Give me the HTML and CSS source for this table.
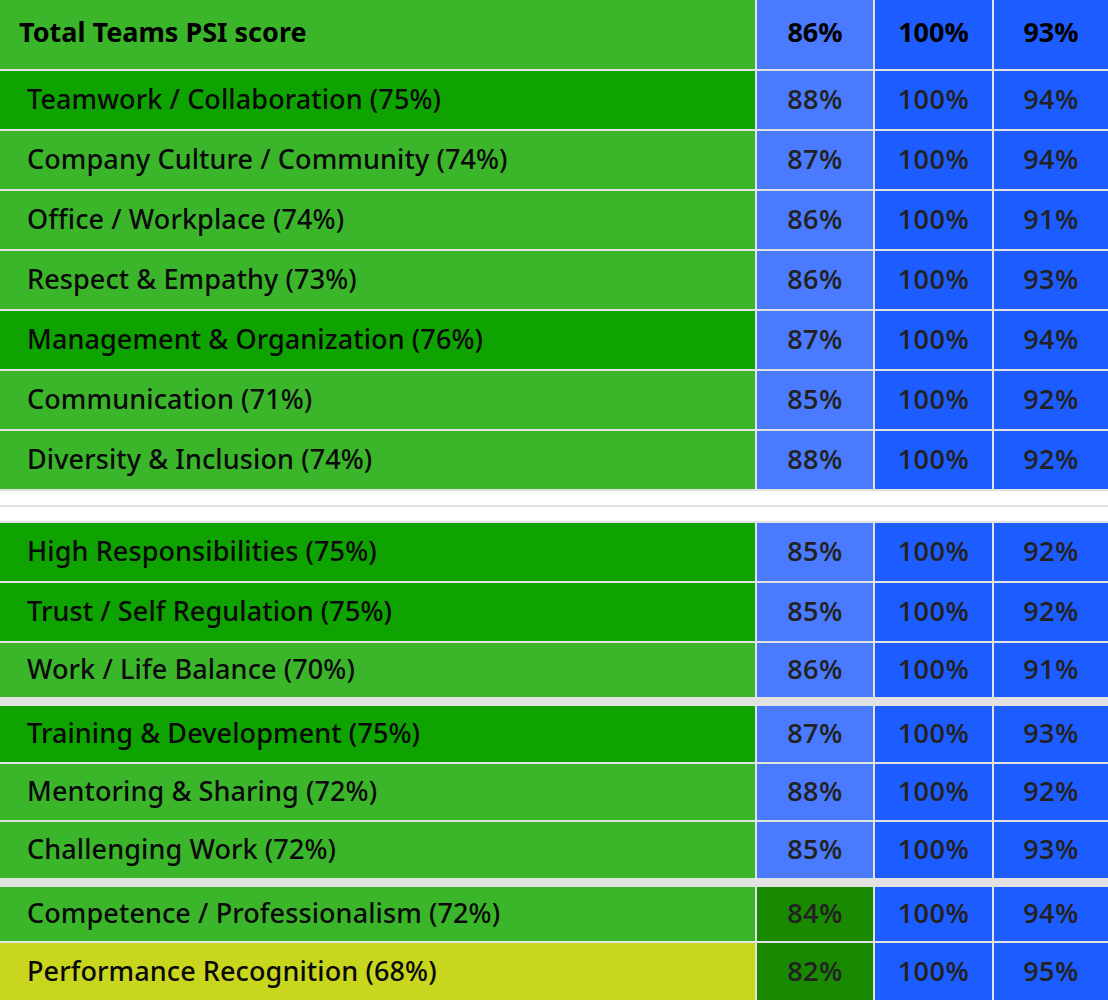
FILE: index.html
```html
<!DOCTYPE html>
<html>
<head>
<meta charset="utf-8">
<link rel="stylesheet" href="styles.css">
</head>
<body>
<div class="table">
  <div class="label head lg">Total Teams PSI score</div>
  <div class="num head lb">86%</div>
  <div class="num head bl">100%</div>
  <div class="num head bl">93%</div>

  <div class="label r58 dg">Teamwork / Collaboration (75%)</div>
  <div class="num lb">88%</div><div class="num bl">100%</div><div class="num bl">94%</div>

  <div class="label r58 lg">Company Culture / Community (74%)</div>
  <div class="num lb">87%</div><div class="num bl">100%</div><div class="num bl">94%</div>

  <div class="label r58 lg">Office / Workplace (74%)</div>
  <div class="num lb">86%</div><div class="num bl">100%</div><div class="num bl">91%</div>

  <div class="label r58 lg">Respect &amp; Empathy (73%)</div>
  <div class="num lb">86%</div><div class="num bl">100%</div><div class="num bl">93%</div>

  <div class="label r58 dg">Management &amp; Organization (76%)</div>
  <div class="num lb">87%</div><div class="num bl">100%</div><div class="num bl">94%</div>

  <div class="label r58 lg">Communication (71%)</div>
  <div class="num lb">85%</div><div class="num bl">100%</div><div class="num bl">92%</div>

  <div class="label r58 lg">Diversity &amp; Inclusion (74%)</div>
  <div class="num lb">88%</div><div class="num bl">100%</div><div class="num bl">92%</div>

  <div class="blank"></div>
  <div class="blank"></div>

  <div class="label r58 dg">High Responsibilities (75%)</div>
  <div class="num lb">85%</div><div class="num bl">100%</div><div class="num bl">92%</div>

  <div class="label r58 dg">Trust / Self Regulation (75%)</div>
  <div class="num lb">85%</div><div class="num bl">100%</div><div class="num bl">92%</div>

  <div class="label r54 lg">Work / Life Balance (70%)</div>
  <div class="num lb">86%</div><div class="num bl">100%</div><div class="num bl">91%</div>

  <div class="band"></div>

  <div class="label r56 dg">Training &amp; Development (75%)</div>
  <div class="num lb">87%</div><div class="num bl">100%</div><div class="num bl">93%</div>

  <div class="label r56 lg">Mentoring &amp; Sharing (72%)</div>
  <div class="num lb">88%</div><div class="num bl">100%</div><div class="num bl">92%</div>

  <div class="label r56 lg">Challenging Work (72%)</div>
  <div class="num lb">85%</div><div class="num bl">100%</div><div class="num bl">93%</div>

  <div class="band"></div>

  <div class="label r54 lg">Competence / Professionalism (72%)</div>
  <div class="num dk">84%</div><div class="num bl">100%</div><div class="num bl">94%</div>

  <div class="label r58 yl">Performance Recognition (68%)</div>
  <div class="num dk">82%</div><div class="num bl">100%</div><div class="num bl">95%</div>
</div>
</body>
</html>
```

FILE: styles.css
```css
html, body {
  margin: 0;
  padding: 0;
  background: #ffffff;
}

.table {
  display: grid;
  grid-template-columns: 755px 116px 117px 114px;
  column-gap: 2px;
  row-gap: 2px;
  background: #e2e2e2;
  width: 1108px;
  overflow: hidden;
}

.label {
  display: flex;
  align-items: center;
  box-sizing: border-box;
  padding-left: 27px;
  padding-bottom: 4px;
  font-family: "Noto Sans", "Open Sans", sans-serif;
  font-size: 27px;
  font-weight: 500;
  letter-spacing: 0.1px;
  color: #0a0a0a;
}

.label.head {
  padding-left: 19px;
  padding-bottom: 7px;
  font-size: 27px;
  font-weight: 700;
  letter-spacing: 0;
  color: #000;
}

.head { height: 69px; }
.r58 { height: 58px; }
.r56 { height: 56px; }
.r54 { height: 54px; }

.num {
  display: flex;
  align-items: center;
  justify-content: center;
  box-sizing: border-box;
  padding-bottom: 3px;
  font-family: "Open Sans", "Noto Sans", sans-serif;
  font-size: 27px;
  font-weight: 600;
  letter-spacing: 0.5px;
  color: #222;
}

.num.head {
  padding-bottom: 7px;
  font-weight: 700;
  letter-spacing: 0;
  color: #000;
}

.lg { background: #3bb62b; }
.dg { background: #0ea300; }
.yl { background: #c8d61e; }
.lb { background: #4a7bff; }
.bl { background: #1d5cff; }
.dk { background: #198a00; }

.blank {
  grid-column: 1 / -1;
  height: 14px;
  background: #ffffff;
}

.band {
  grid-column: 1 / -1;
  height: 5px;
  background: #e2e2e2;
}
```
